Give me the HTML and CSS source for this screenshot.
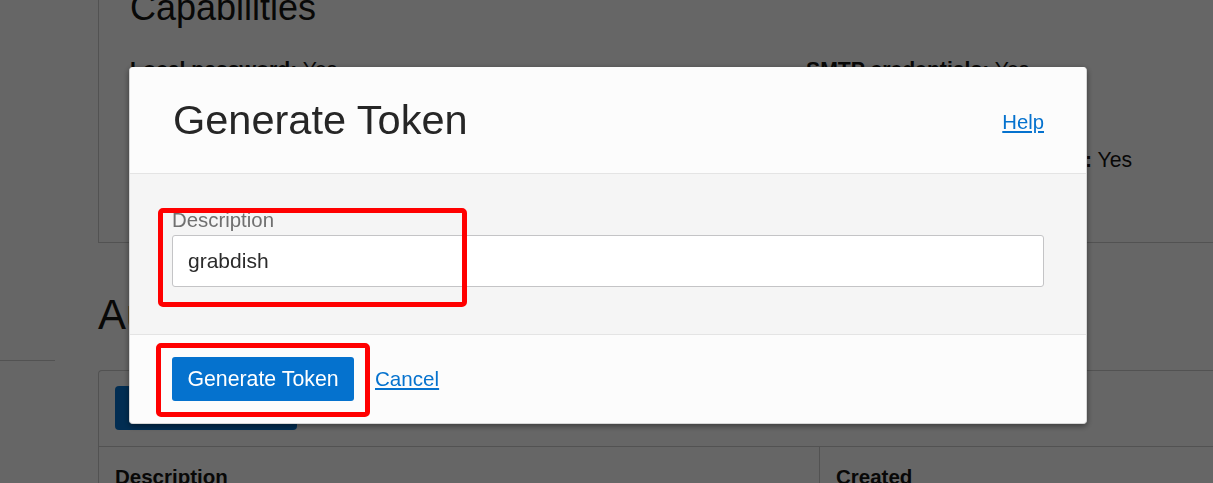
FILE: index.html
```html
<!DOCTYPE html>
<html lang="en">
<head>
<meta charset="utf-8">
<title>Generate Token</title>
<link rel="stylesheet" href="styles.css">
</head>
<body>
<div class="page">
  <nav class="nav">
    <div class="nav-list"></div>
  </nav>
  <main class="main">
    <section class="caps">
      <h2 class="caps-title">Capabilities</h2>
      <div class="caps-grid">
        <div class="cap"><b>Local password:</b> Yes</div>
        <div class="cap"><b>SMTP credentials:</b> Yes</div>
        <div class="cap"><b>API keys:</b> Yes</div>
        <div class="cap"><b>Customer secret keys:</b> Yes</div>
        <div class="cap"><b>Auth tokens:</b> Yes</div>
        <div class="cap"><b>OAuth 2.0 client credentials:</b> Yes</div>
      </div>
    </section>
    <h2 class="section-title">Auth Tokens</h2>
    <div class="table-box">
      <div class="toolbar">
        <button class="btn-page">Generate Token</button>
      </div>
      <div class="thead">
        <div class="th th-desc">Description</div>
        <div class="th th-created">Created</div>
      </div>
    </div>
  </main>
</div>

<div class="overlay">
  <div class="dialog">
    <div class="dialog-header">
      <h1 class="dialog-title">Generate Token</h1>
      <a class="link link-help" href="#">Help</a>
    </div>
    <div class="dialog-body">
      <label class="field-label" for="desc">Description</label>
      <input class="field-input" id="desc" type="text" value="grabdish">
    </div>
    <div class="dialog-footer">
      <button class="btn-primary">Generate Token</button>
      <a class="link link-cancel" href="#">Cancel</a>
    </div>
    <div class="mark mark-field"></div>
    <div class="mark mark-button"></div>
  </div>
</div>
</body>
</html>
```

FILE: styles.css
```css
* { box-sizing: border-box; }

html, body {
  margin: 0;
  padding: 0;
  height: 100%;
  overflow: hidden;
  background: #ffffff;
  font-family: "Liberation Sans", Arial, sans-serif;
  color: #161513;
}

/* ---------- background page ---------- */
.page {
  display: grid;
  grid-template-columns: 55px 1250px;
  column-gap: 43px;
  margin-top: -30px;
}

.nav-list {
  height: 391px;
  border-bottom: 1px solid #cccccc;
}

.caps {
  border: 1px solid #cccccc;
  border-right: none;
  padding: 15px 0 70px 31px;
}

.caps-title {
  margin: 0;
  font-size: 36px;
  line-height: 44px;
  font-weight: normal;
}

.caps-grid {
  display: grid;
  grid-template-columns: 676px 1fr;
  row-gap: 21px;
  margin-top: 28px;
}

.cap {
  font-size: 21.2px;
  line-height: 24px;
}

.section-title {
  margin: 47px 0 30px;
  font-size: 42px;
  line-height: 50px;
  font-weight: normal;
}

.table-box {
  border: 1px solid #cccccc;
  border-right: none;
  border-radius: 4px 0 0 0;
}

.toolbar {
  padding: 15px 16px 16px;
  border-bottom: 1px solid #cccccc;
}

.btn-page {
  display: block;
  width: 182px;
  height: 44px;
  border: none;
  border-radius: 4px;
  background: #0572ce;
  color: #ffffff;
  font-family: inherit;
  font-size: 20px;
}

.thead {
  display: grid;
  grid-template-columns: 720px 1fr;
}

.th {
  padding: 18px 16px;
  font-size: 20.5px;
  line-height: 24px;
  font-weight: bold;
}

.th-created {
  border-left: 1px solid #cccccc;
}

/* ---------- modal ---------- */
.overlay {
  position: fixed;
  inset: 0;
  background: rgba(0, 0, 0, 0.6);
  padding: 67px 0 0 129px;
}

.dialog {
  position: relative;
  width: 958px;
  border-radius: 4px;
  background: #fcfcfc;
  box-shadow: 0 2px 6px rgba(0, 0, 0, 0.45);
  border: 1px solid #d6d6d6;
  border-top: none;
}

.dialog-header {
  height: 107px;
  padding: 0 42px 0 43px;
  display: flex;
  align-items: center;
  justify-content: space-between;
  border-bottom: 1px solid #e4e4e4;
  border-radius: 4px 4px 0 0;
  background: #fcfcfc;
}

.dialog-title {
  margin: 0;
  font-size: 41.5px;
  line-height: 48px;
  font-weight: normal;
  color: #262626;
}

.link {
  font-size: 20px;
  line-height: 24px;
  color: #0572ce;
  text-decoration: underline;
}

.link-help {
  margin-top: 4px;
  font-size: 20.3px;
}

.link-cancel {
  font-size: 20.6px;
}

.dialog-body {
  background: #f5f5f5;
  padding: 34px 42px 47px 42px;
  border-bottom: 1px solid #e4e4e4;
}

.field-label {
  display: block;
  font-size: 20.4px;
  line-height: 24px;
  color: #707070;
  margin-bottom: 3px;
}

.field-input {
  display: block;
  width: 100%;
  height: 52px;
  padding: 0 15px;
  border: 1px solid #c4c4c6;
  border-radius: 3px;
  background: #ffffff;
  font-family: inherit;
  font-size: 21px;
  color: #2b2b2b;
  outline: none;
}

.dialog-footer {
  display: flex;
  align-items: center;
  gap: 21px;
  padding: 22px 42px;
  background: #fcfcfc;
  border-radius: 0 0 4px 4px;
}

.btn-primary {
  height: 44px;
  width: 182px;
  padding: 0 10px;
  border: none;
  border-radius: 3px;
  background: #0572ce;
  color: #ffffff;
  font-family: inherit;
  font-size: 21.3px;
}

/* annotation rectangles */
.mark {
  position: absolute;
  border: 5px solid #ff0000;
  border-radius: 5px;
  pointer-events: none;
}

.mark-field {
  left: 28px;
  top: 141px;
  width: 309px;
  height: 99px;
}

.mark-button {
  left: 26px;
  top: 276px;
  width: 214px;
  height: 74px;
}
```
